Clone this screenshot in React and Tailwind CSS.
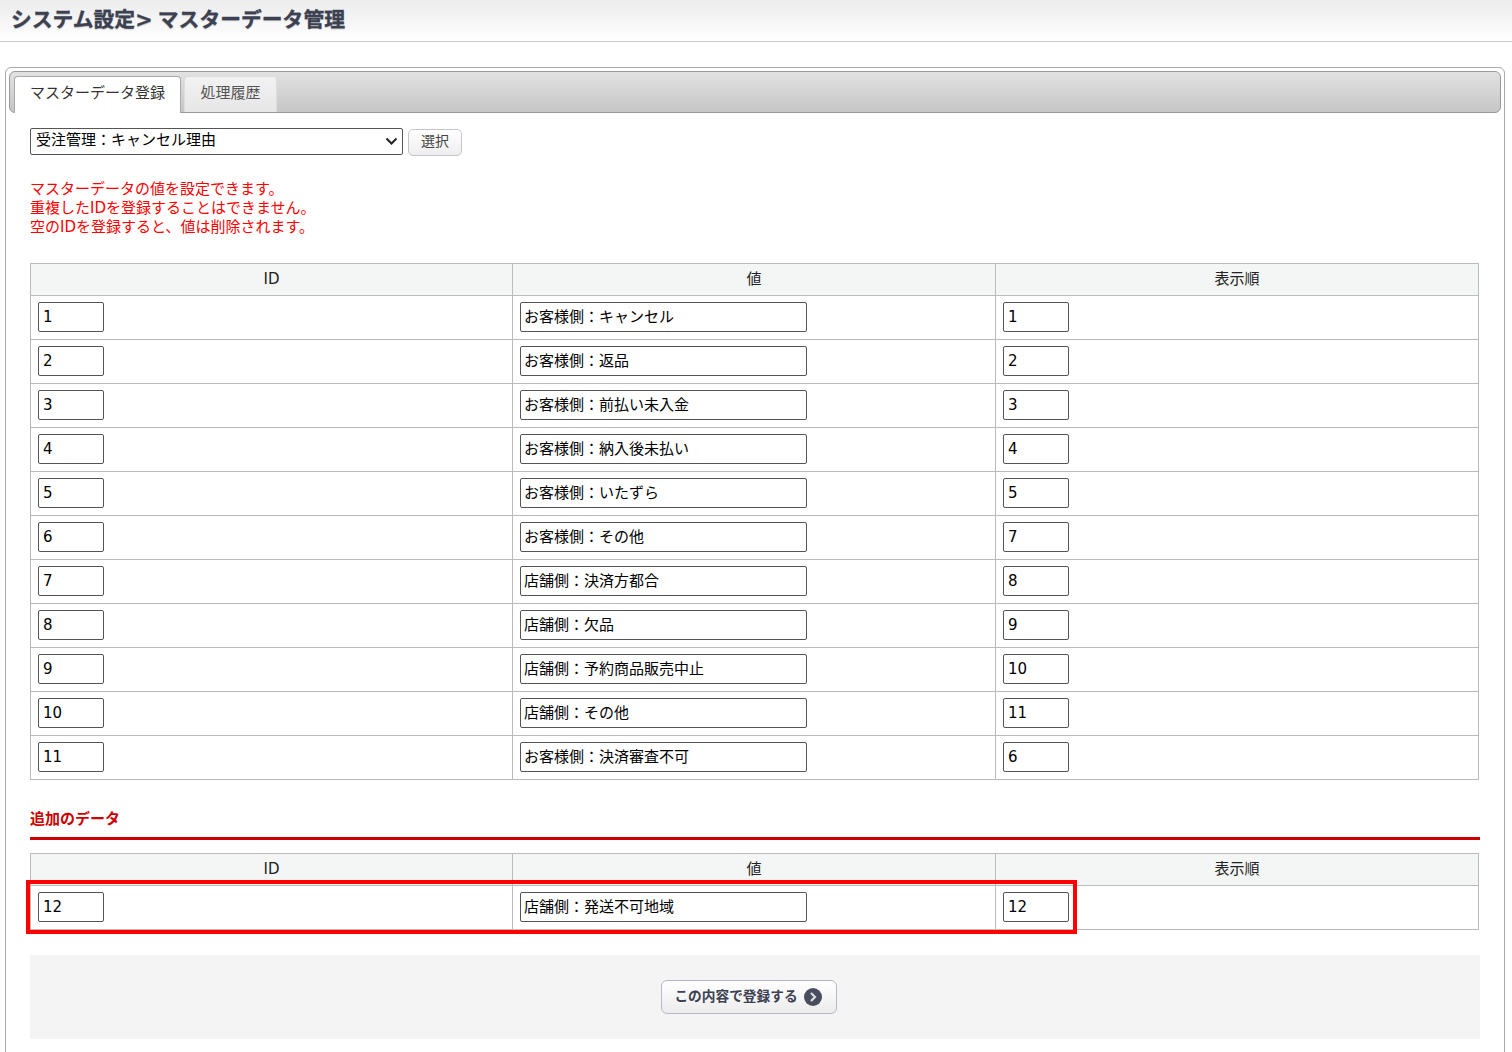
import React from 'react';

const FONT = "font-['DejaVu_Sans','Noto_Sans_CJK_JP',sans-serif]";

const rows = [
    ['1', 'お客様側：キャンセル', '1'],
    ['2', 'お客様側：返品', '2'],
    ['3', 'お客様側：前払い未入金', '3'],
    ['4', 'お客様側：納入後未払い', '4'],
    ['5', 'お客様側：いたずら', '5'],
    ['6', 'お客様側：その他', '7'],
    ['7', '店舗側：決済方都合', '8'],
    ['8', '店舗側：欠品', '9'],
    ['9', '店舗側：予約商品販売中止', '10'],
    ['10', '店舗側：その他', '11'],
    ['11', 'お客様側：決済審査不可', '6'],
];

function TextBox({ value, wide }) {
    return (
        <input
            readOnly
            value={value}
            className={`${wide ? 'w-[287px] pb-[3px] pl-[3px]' : 'w-[66px] pl-1'} block h-[30px] rounded-[2px] border border-[#555] bg-white pr-1 text-[15px] text-black outline-none`}
        />
    );
}

function MasterTable({ data }) {
    return (
        <table className="w-[1448px] table-fixed border-collapse text-[15px] text-[#222]">
            <colgroup>
                <col className="w-[482px]" />
                <col className="w-[483px]" />
                <col className="w-[483px]" />
            </colgroup>
            <thead>
                <tr className="h-[32px] bg-[#f4f5f5]">
                    <th className="border border-[#bbb] font-normal">ID</th>
                    <th className="border border-[#bbb] font-normal">値</th>
                    <th className="border border-[#bbb] font-normal">表示順</th>
                </tr>
            </thead>
            <tbody>
                {data.map((row) => (
                    <tr key={row[0]} className="h-[44px]">
                        <td className="border border-[#bbb] px-[7px] pt-[6px] align-top"><TextBox value={row[0]} /></td>
                        <td className="border border-[#bbb] px-[7px] pt-[6px] align-top"><TextBox value={row[1]} wide /></td>
                        <td className="border border-[#bbb] px-[7px] pt-[6px] align-top"><TextBox value={row[2]} /></td>
                    </tr>
                ))}
            </tbody>
        </table>
    );
}

export default function App() {
    return (
        <div className={`${FONT} h-[1052px] overflow-hidden bg-white`}>
            {/* Page title */}
            <header className="flex h-[42px] items-start border-b border-[#ccc] bg-gradient-to-b from-[#ececec] to-white pl-[11px] pt-[6px]">
                <h1 className="text-[20.8px] leading-[28px] font-bold text-[#3c4152] [-webkit-text-stroke:0.3px_#3c4152] [text-shadow:0_1px_1px_#bbb] [word-spacing:-2px]">
                    システム設定&gt; マスターデータ管理
                </h1>
            </header>

            {/* Panel */}
            <div className="mx-[5px] mt-[25px] h-[1100px] w-[1500px] rounded-t-[6px] border border-[#aaa] p-[3px]">
                {/* Tabs */}
                <div className="flex h-[42px] items-end gap-[3px] rounded-[6px] border border-[#999] bg-gradient-to-b from-[#e2e2e2] to-[#c6c6c6] pl-[4px]">
                    <div className="-mb-px flex h-[37px] w-[167px] items-center justify-center rounded-t-[4px] border border-b-0 border-[#aaa] bg-white pb-[3px] text-[15px] text-[#333]">
                        マスターデータ登録
                    </div>
                    <div className="flex h-[36px] w-[93px] items-center justify-center rounded-t-[4px] border border-b-0 border-[#ddd] bg-gradient-to-b from-[#f2f2f2] to-[#e6e6e6] pb-[2px] text-[15px] text-[#555]">
                        処理履歴
                    </div>
                </div>

                <div className="pl-[21px]">
                    {/* Master selector */}
                    <div className="mt-[14px] flex items-center gap-[5px]">
                        <div className="relative">
                            <select className="block h-[27px] w-[373px] appearance-none rounded-[2px] border border-[#555] bg-white pb-[2px] pl-[5px] text-[15px] text-black">
                                <option>受注管理：キャンセル理由</option>
                            </select>
                            <svg className="pointer-events-none absolute right-[5px] top-[9px]" width="13" height="9" viewBox="0 0 13 9">
                                <path d="M1.5 1.5l5 5 5-5" fill="none" stroke="#222" strokeWidth="2" />
                            </svg>
                        </div>
                        <button className="mt-[2px] h-[27px] w-[54px] rounded-[5px] border border-[#c4c4cc] bg-gradient-to-b from-white to-[#eeeeee] pb-[2px] text-[14px] text-[#444]">
                            選択
                        </button>
                    </div>

                    <p className="mt-[24px] text-[15px] leading-[19px] text-[#ff0000]">
                        マスターデータの値を設定できます。<br />
                        重複したIDを登録することはできません。<br />
                        空のIDを登録すると、値は削除されます。
                    </p>

                    <div className="mt-[26px]">
                        <MasterTable data={rows} />
                    </div>

                    <h2 className="mt-[27px] h-[30px] w-[1450px] text-[15px] leading-[24px] font-bold text-[#cc0000]">
                        追加のデータ
                    </h2>
                    <div className="h-[3px] w-[1450px] bg-[#cc0000]" />

                    <div className="relative mt-[13px] w-[1448px]">
                        <MasterTable data={[['12', '店舗側：発送不可地域', '12']]} />
                        {/* Highlight drawn over the new row */}
                        <div className="pointer-events-none absolute left-[-4px] top-[27px] h-[54px] w-[1051px] border-4 border-[#ff0000]" />
                    </div>

                    {/* Submit area */}
                    <div className="mt-[25px] flex h-[84px] w-[1450px] items-center justify-center bg-[#f4f4f4] pr-[12px]">
                        <button className="flex h-[34px] w-[176px] items-center justify-center gap-[6px] rounded-[6px] border border-[#b8b8c4] bg-gradient-to-b from-white to-[#ececec] pr-[2px] text-[13.7px] font-bold text-[#3c4152]">
                            <span className="pb-[2px]">この内容で登録する</span>
                            <svg width="18" height="18" viewBox="0 0 18 18">
                                <circle cx="9" cy="9" r="9" fill="#4a4d60" />
                                <path d="M7 5l4 4-4 4" fill="none" stroke="#dcdce0" strokeWidth="2.2" />
                            </svg>
                        </button>
                    </div>
                </div>
            </div>
        </div>
    );
}
